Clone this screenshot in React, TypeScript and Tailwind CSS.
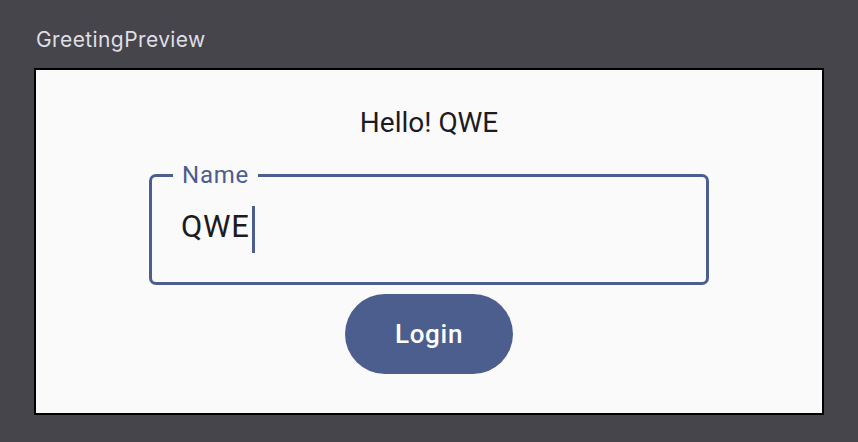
const App = () => {
    return (
        <div className="min-h-screen w-full bg-[#46454b] pt-[28px] pl-[34px]">
            {/* Preview title */}
            <div
                className="ml-[2px] text-[21px] leading-[24px] tracking-[0.4px] text-[#dfdee3]"
                style={{ fontFamily: "Inter, 'Noto Sans', sans-serif" }}
            >
                GreetingPreview
            </div>

            {/* Preview frame */}
            <div
                className="mt-[16px] w-[790px] h-[347px] border-2 border-black bg-[#fafafa] flex flex-col items-center pt-[37px]"
                style={{ fontFamily: "Roboto, 'Liberation Sans', sans-serif" }}
            >
                <div className="text-[28px] leading-[32px] text-[#1c1b1f]">Hello! QWE</div>

                {/* Outlined text field */}
                <div className="relative mt-[35px] w-[560px] h-[111px] border-[3px] border-[#4b5e8d] rounded-[7px] pt-[31px] pl-[29px]">
                    <span className="absolute -top-[14.5px] left-[21px] bg-[#fafafa] px-[9px] text-[24px] leading-[24px] tracking-[0.8px] text-[#4b5e8d]">
                        Name
                    </span>
                    <div className="flex items-start">
                        <span className="text-[31px] leading-[37px] tracking-[0.9px] text-[#1c1b1f]">QWE</span>
                        <span className="ml-[2px] -mt-[2px] w-[3px] h-[47px] bg-[#4b5e8d]" />
                    </div>
                </div>

                {/* Login button */}
                <button className="mt-[9px] w-[168px] h-[80px] rounded-full bg-[#4b5e8d] text-white text-[26px] font-medium tracking-[0.7px] flex items-center justify-center">
                    Login
                </button>
            </div>
        </div>
    );
};

export default App;
